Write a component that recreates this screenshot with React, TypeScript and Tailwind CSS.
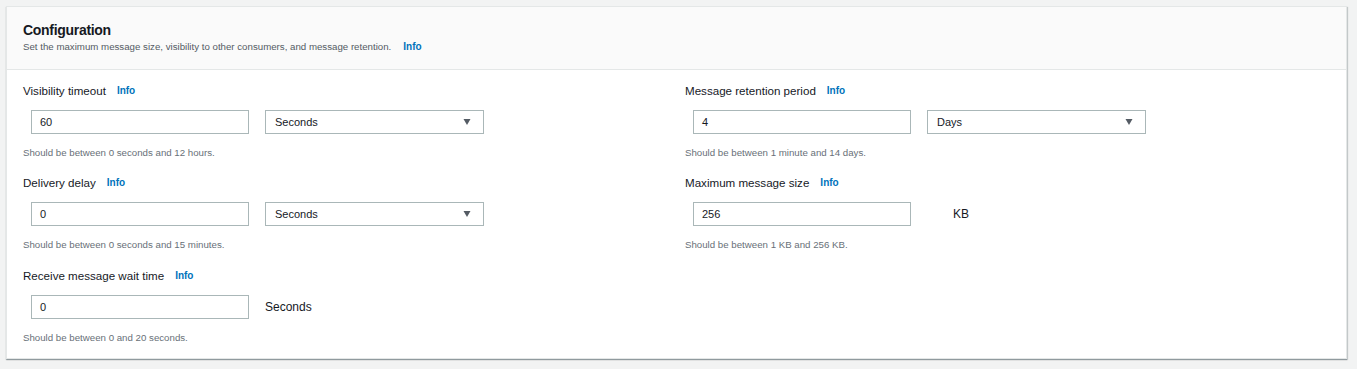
import React from "react";

const font = { fontFamily: '"Liberation Sans", Arial, sans-serif' };

function Info() {
  return <span className="text-[10px] font-bold text-[#0073bb] leading-[20px]">Info</span>;
}

function Caret() {
  return (
    <svg width="8" height="6" viewBox="0 0 8 6" className="shrink-0">
      <path d="M0.5 0 H7.5 L4 6 Z" fill="#545b64" />
    </svg>
  );
}

function TextBox({ value }: { value: string }) {
  return (
    <div className="w-[218px] h-[24px] border border-[#aab7b8] bg-white flex items-center pl-[8px] text-[11px] text-[#16191f]">
      {value}
    </div>
  );
}

function SelectBox({ value }: { value: string }) {
  return (
    <div className="w-[219px] h-[24px] border border-[#aab7b8] bg-white flex items-center justify-between pl-[9px] pr-[12px] text-[11px] text-[#16191f]">
      <span>{value}</span>
      <Caret />
    </div>
  );
}

function Field({
  label,
  value,
  select,
  unit,
  unitClass = "",
  help,
  className = "",
}: {
  label: string;
  value: string;
  select?: string;
  unit?: string;
  unitClass?: string;
  help: string;
  className?: string;
}) {
  return (
    <div className={className}>
      <div className="flex items-center gap-[11px] h-[20px]">
        <span className="text-[11.6px] text-[#16191f] leading-[20px]">{label}</span>
        <Info />
      </div>
      <div className="flex items-center gap-[16px] mt-[9px] ml-[8px]">
        <TextBox value={value} />
        {select ? (
          <SelectBox value={select} />
        ) : (
          <span className={"text-[12px] text-[#16191f] " + unitClass}>{unit}</span>
        )}
      </div>
      <div className="mt-[11px] text-[9.7px] leading-[16px] text-[#687078]">{help}</div>
    </div>
  );
}

export default function App() {
  return (
    <div className="w-[1357px] h-[369px] bg-[#f2f3f3] pt-[6px] pl-[6px] overflow-hidden" style={font}>
      <div className="w-[1341px] bg-white border border-[#e4e7e7] shadow-[0_1px_1px_0_rgba(0,28,36,0.3),1px_1px_1px_0_rgba(0,28,36,0.15)]">
        <div className="bg-[#fafafa] border-b border-[#e4e7e7] px-[16px] pt-[13px] pb-[15px]">
          <div className="text-[14px] font-bold leading-[20px] tracking-[-0.3px] text-[#16191f]">Configuration</div>
          <div className="flex items-center gap-[12px] h-[14px]">
            <span className="text-[9.7px] text-[#545b64]">
              Set the maximum message size, visibility to other consumers, and message retention.
            </span>
            <Info />
          </div>
        </div>
        <div className="grid grid-cols-[662px_1fr] px-[16px] pt-[11px] pb-[12px]">
          <div>
            <Field
              label="Visibility timeout"
              value="60"
              select="Seconds"
              help="Should be between 0 seconds and 12 hours."
            />
            <Field
              className="mt-[12px]"
              label="Delivery delay"
              value="0"
              select="Seconds"
              help="Should be between 0 seconds and 15 minutes."
            />
            <Field
              className="mt-[13px]"
              label="Receive message wait time"
              value="0"
              unit="Seconds"
              help="Should be between 0 and 20 seconds."
            />
          </div>
          <div>
            <Field
              label="Message retention period"
              value="4"
              select="Days"
              help="Should be between 1 minute and 14 days."
            />
            <Field
              className="mt-[12px]"
              label="Maximum message size"
              value="256"
              unit="KB"
              unitClass="ml-[26px]"
              help="Should be between 1 KB and 256 KB."
            />
          </div>
        </div>
      </div>
    </div>
  );
}
